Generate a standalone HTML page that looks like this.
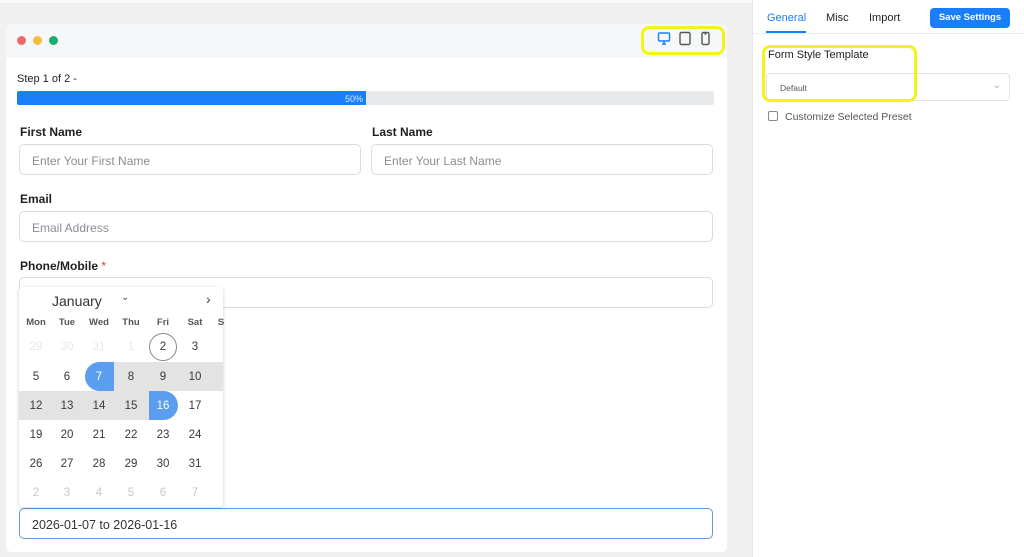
<!DOCTYPE html>
<html><head><meta charset="utf-8"><style>
*{box-sizing:border-box;margin:0;padding:0}
body{width:1024px;height:557px;overflow:hidden;background:#f0f0f1;font-family:"Liberation Sans",Arial,sans-serif;color:#1e1f21;position:relative}
.abs{position:absolute}
.card{left:6px;top:24px;width:721px;height:528px;background:#fff;border-radius:6px}
.hdr{left:6px;top:24px;width:721px;height:34px;background:#f6f7f9;border-radius:6px 6px 0 0}
.dot{width:9px;height:9px;border-radius:50%;top:36px}
.lbl{font-size:12px;font-weight:600;color:#1e1f21}
.inp{border:1px solid #dadbdd;border-radius:5px;height:31px;font-size:12px;color:#8a8d93;padding:9px 12px;background:#fff}
.right{left:752px;top:0;width:272px;height:557px;background:#fff;border-left:1px solid #e6e6e8}
.cal{left:19px;top:287px;width:204px;height:220px;background:#fff;border-radius:4px;box-shadow:0 1px 4px rgba(0,0,0,.18)}
.c{position:absolute;width:28px;height:28px;line-height:28px;text-align:center;font-size:11.5px;color:#393939}
.wd{position:absolute;font-size:9.5px;color:#555;font-weight:bold;width:32px;text-align:center}
.yl{border:3px solid #f3f31a;border-radius:8px}
</style></head><body>
<div class="abs" style="left:0;top:0;width:752px;height:3px;background:#fafafa"></div>
<div class="abs card"></div>
<div class="abs hdr"></div>
<div class="abs dot" style="left:17px;background:#ee6a6a"></div>
<div class="abs dot" style="left:33px;background:#f6bc3c"></div>
<div class="abs dot" style="left:49px;background:#17ad6c"></div>
<div class="abs yl" style="left:641px;top:26px;width:84px;height:29px"></div>
<svg class="abs" style="left:657px;top:31px" width="60" height="16" viewBox="0 0 60 16" fill="none" stroke-width="1.4">
<rect x="1.5" y="2" width="11" height="8" rx="1" stroke="#1a7efb"/><path d="M5 13h4M7 10v3" stroke="#1a7efb"/>
<rect x="23" y="1.5" width="10" height="12" rx="1.5" stroke="#555"/>
<rect x="45" y="1.5" width="7" height="12" rx="1.5" stroke="#555"/><path d="M47.5 3h2" stroke="#555"/>
</svg>
<div class="abs" style="left:17px;top:73px;font-size:11px">Step 1 of 2 -</div>
<div class="abs" style="left:17px;top:91px;width:697px;height:14px;background:#e8e9eb;border-radius:2px"></div>
<div class="abs" style="left:17px;top:91px;width:349px;height:14px;background:#1a7efb;border-radius:2px 0 0 2px;color:#dfeaff;font-size:9px;text-align:right;padding:3px 3px 0 0">50%</div>
<div class="abs lbl" style="left:20px;top:125px">First Name</div>
<div class="abs lbl" style="left:372px;top:125px">Last Name</div>
<div class="abs inp" style="left:19px;top:144px;width:342px">Enter Your First Name</div>
<div class="abs inp" style="left:371px;top:144px;width:342px">Enter Your Last Name</div>
<div class="abs lbl" style="left:20px;top:192px">Email</div>
<div class="abs inp" style="left:19px;top:211px;width:694px">Email Address</div>
<div class="abs lbl" style="left:20px;top:259px">Phone/Mobile <span style="color:#e33;font-weight:normal">*</span></div>
<div class="abs inp" style="left:19px;top:277px;width:694px"></div>
<div class="abs inp" style="left:19px;top:508px;width:694px;border-color:#5b9ae0;color:#333;font-size:12.5px">2026-01-07 to 2026-01-16</div>
<div class="abs cal">
<div class="abs" style="left:33px;top:6px;font-size:14px;color:#333">January</div>
<div class="abs" style="left:102px;top:5px;font-size:10px;color:#555">&#8964;</div>
<div class="abs" style="left:187px;top:4px;font-size:14px;color:#444">&#8250;</div>
<div class="wd" style="left:1px;top:30px">Mon</div><div class="wd" style="left:32px;top:30px">Tue</div><div class="wd" style="left:64px;top:30px">Wed</div><div class="wd" style="left:96px;top:30px">Thu</div><div class="wd" style="left:128px;top:30px">Fri</div><div class="wd" style="left:160px;top:30px">Sat</div><div class="wd" style="left:186px;top:30px">S</div>
<div class="abs" style="left:80px;top:75px;width:124px;height:29px;background:#e3e3e3"></div>
<div class="abs" style="left:0;top:104px;width:145px;height:29px;background:#e3e3e3"></div>
<div class="abs" style="left:66px;top:75px;width:29px;height:29px;background:#5b9ef0;border-radius:15px 0 0 15px"></div>
<div class="abs" style="left:130px;top:104px;width:29px;height:29px;background:#5b9ef0;border-radius:0 15px 15px 0"></div>
<div class="abs" style="left:130px;top:46px;width:28px;height:28px;border:1px solid #888;border-radius:50%"></div>
</div>
<script>
var rows=[["29","30","31","1","2","3"],["5","6","7","8","9","10"],["12","13","14","15","16","17"],["19","20","21","22","23","24"],["26","27","28","29","30","31"],["2","3","4","5","6","7"]];
var xs=[36,67,99,131,163,195],ys=[347,377,406,435,464,493],h="";
rows.forEach(function(r,i){r.forEach(function(d,j){var col="#393939";if(i==0&&j<4)col="#e8e8e8";if(i==5)col="#c8c8c8";if((i==1&&j==2)||(i==2&&j==4))col="#fff";h+='<div class="c" style="left:'+(xs[j]-14)+'px;top:'+(ys[i]-14)+'px;color:'+col+'">'+d+'</div>';});});
document.body.insertAdjacentHTML("beforeend",h);
</script>
<div class="abs right"></div>
<div class="abs" style="left:767px;top:12px;font-size:11px;color:#1a7efb">General</div>
<div class="abs" style="left:766px;top:31px;width:40px;height:2px;background:#1a7efb"></div>
<div class="abs" style="left:826px;top:12px;font-size:11px;color:#1e1f21">Misc</div>
<div class="abs" style="left:869px;top:12px;font-size:11px;color:#1e1f21">Import</div>
<div class="abs" style="left:930px;top:8px;width:80px;height:20px;background:#1a7efb;border-radius:4px;color:#fff;font-size:9.5px;font-weight:bold;text-align:center;line-height:20px">Save Settings</div>
<div class="abs" style="left:753px;top:33px;width:271px;height:1px;background:#ececee"></div>
<div class="abs" style="left:768px;top:49px;font-size:11px">Form Style Template</div>
<div class="abs" style="left:766px;top:73px;width:244px;height:28px;border:1px solid #e3e3e5;border-radius:4px;font-size:8.5px;color:#555;padding:9px 13px">Default<span style="position:absolute;right:8px;top:6px;color:#aaa;font-size:10px">&#8964;</span></div>
<div class="abs yl" style="left:762px;top:45px;width:155px;height:57px"></div>
<div class="abs" style="left:768px;top:111px;width:10px;height:10px;border:1px solid #888;border-radius:2px"></div>
<div class="abs" style="left:785px;top:111px;font-size:10.5px;color:#555">Customize Selected Preset</div>
</body></html>
